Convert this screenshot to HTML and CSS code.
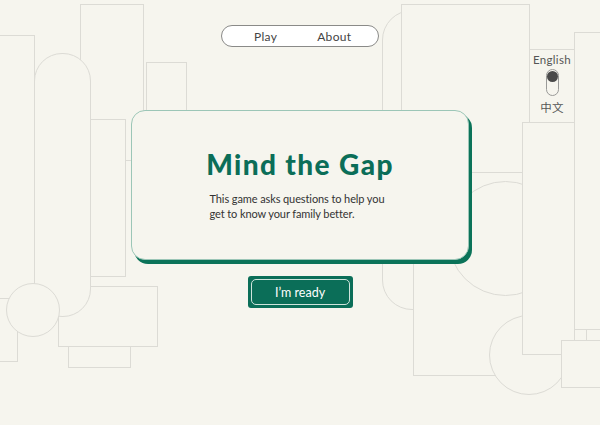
FILE: index.html
```html
<!DOCTYPE html>
<html lang="en">
<head>
<meta charset="utf-8">
<title>Mind the Gap</title>
<link rel="stylesheet" href="styles.css">
</head>
<body>
<div class="canvas" aria-hidden="true">
  <div class="shape s-c"></div>
  <div class="shape s-e"></div>
  <div class="shape s-a"></div>
  <div class="shape s-d"></div>
  <div class="shape s-g"></div>
  <div class="shape s-i"></div>
  <div class="shape s-h"></div>
  <div class="shape s-pill"></div>
  <div class="shape round s-f"></div>
  <div class="shape s-j"></div>
  <div class="shape s-k"></div>
  <div class="shape s-l"></div>
  <div class="shape round s-m"></div>
  <div class="shape s-o"></div>
  <div class="shape s-q"></div>
  <div class="shape s-p"></div>
  <div class="shape round s-s"></div>
  <div class="shape s-n"></div>
  <div class="shape s-r"></div>
</div>

<nav class="nav">
  <a class="nav-link" href="#">Play</a>
  <a class="nav-link" href="#">About</a>
</nav>

<div class="lang">
  <span class="lang-label">English</span>
  <span class="switch"><span class="knob"></span></span>
  <span class="lang-label">中文</span>
</div>

<main class="main">
  <section class="card">
    <h1 class="title">Mind the Gap</h1>
    <p class="intro">This game asks questions to help you<br>get to know your family better.</p>
  </section>
  <button class="ready"><span class="ready-inner">I’m ready</span></button>
</main>
</body>
</html>
```

FILE: styles.css
```css
* { box-sizing: border-box; }
html, body { margin: 0; padding: 0; }
body {
  width: 600px;
  height: 425px;
  overflow: hidden;
  position: relative;
  background: #f6f5ee;
  font-family: "Lato", "Noto Sans CJK SC", sans-serif;
  color: #333;
}

.canvas { position: absolute; inset: 0; }
.shape {
  position: absolute;
  border: 1px solid #dcdbd5;
  background: #f6f5ee;
}
.round { border-radius: 50%; }

.s-a { left: -1px; top: 35px; width: 36px; height: 264px; }
.s-pill { left: 34px; top: 53px; width: 57px; height: 264px; border-radius: 28px; }
.s-c { left: 80px; top: 4px; width: 64px; height: 157px; }
.s-d { left: 90px; top: 119px; width: 36px; height: 158px; }
.s-e { left: 146px; top: 62px; width: 41px; height: 60px; }
.s-f { left: 6px; top: 283px; width: 54px; height: 54px; }
.s-g { left: -1px; top: 298px; width: 19px; height: 64px; }
.s-h { left: 58px; top: 286px; width: 100px; height: 61px; }
.s-i { left: 68px; top: 346px; width: 63px; height: 22px; }

.s-j { left: 382px; top: 10px; width: 60px; height: 300px; border-radius: 30px 0 0 30px; }
.s-k { left: 401px; top: 4px; width: 129px; height: 169px; }
.s-l { left: 413px; top: 172px; width: 120px; height: 204px; }
.s-m { left: 448px; top: 181px; width: 115px; height: 115px; }
.s-o { left: 529px; top: 49px; width: 46px; height: 74px; }
.s-n { left: 522px; top: 122px; width: 53px; height: 233px; }
.s-q { left: 586px; top: 300px; width: 30px; height: 41px; }
.s-p { left: 574px; top: 32px; width: 40px; height: 298px; }
.s-s { left: 489px; top: 315px; width: 80px; height: 80px; }
.s-r { left: 561px; top: 340px; width: 50px; height: 48px; }

.nav {
  position: relative;
  margin: 25px auto 0;
  width: 158px;
  height: 22px;
  border: 1px solid #8a8a88;
  border-radius: 11px;
  background: #fff;
  display: flex;
  align-items: center;
  gap: 40px;
  padding: 0 0 0 32px;
}
.nav-link {
  font-family: "Lato", sans-serif;
  font-size: 12px;
  color: #444;
  text-decoration: none;
  letter-spacing: 0.3px;
}

.lang {
  position: absolute;
  left: 529px;
  top: 52px;
  width: 46px;
  display: flex;
  flex-direction: column;
  align-items: center;
  color: #555;
}
.lang-label {
  font-family: "Lato", "Noto Sans CJK SC", sans-serif;
  font-size: 11.5px;
  line-height: 15px;
  letter-spacing: 0.3px;
}
.switch {
  margin: 2px 0 4px;
  width: 13px;
  height: 27px;
  border: 1px solid #9a9a98;
  border-radius: 7px;
  background: #f6f5ee;
  position: relative;
}
.knob {
  position: absolute;
  left: 0;
  top: 1px;
  width: 11px;
  height: 11px;
  border-radius: 50%;
  background: #4a4a4a;
}

.main {
  position: relative;
  display: flex;
  flex-direction: column;
  align-items: center;
  margin-top: 63px;
}
.card {
  width: 338px;
  height: 150px;
  border: 1px solid #9cc6b7;
  border-radius: 14px;
  background: #f6f5ee;
  box-shadow: 3px 4px 0 #0b7359;
  display: flex;
  flex-direction: column;
  align-items: center;
  padding-top: 36px;
}
.title {
  margin: 0;
  font-family: "Lato", sans-serif;
  font-weight: 900;
  font-size: 28px;
  line-height: 34px;
  letter-spacing: 1.4px;
  color: #0b6e58;
}
.intro {
  margin: 10px 0 0 -6px;
  font-family: "Lato", sans-serif;
  font-size: 11px;
  line-height: 15px;
  letter-spacing: -0.1px;
  color: #333;
  white-space: nowrap;
}
.ready {
  margin-top: 16px;
  width: 105px;
  height: 32px;
  padding: 3px;
  border: none;
  border-radius: 3px;
  background: #0b6e58;
  cursor: pointer;
  display: flex;
}
.ready-inner {
  flex: 1;
  display: flex;
  align-items: center;
  justify-content: center;
  border: 1px solid #cfe4dc;
  border-radius: 5px;
  color: #fff;
  font-family: "Lato", sans-serif;
  font-size: 12.5px;
}
```
